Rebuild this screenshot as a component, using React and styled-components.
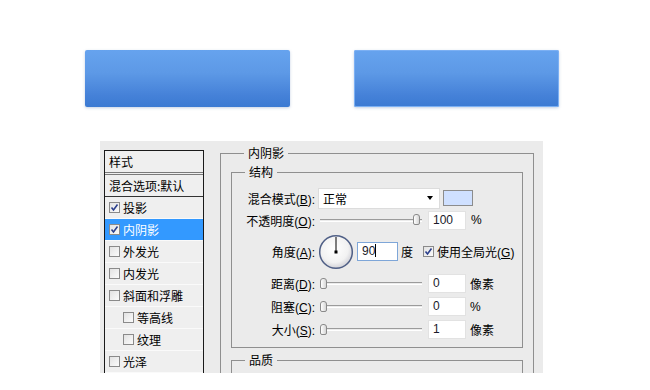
import React from 'react';
import styled, { createGlobalStyle } from 'styled-components';

const Global = createGlobalStyle`
  body {
    margin: 0;
    background: #fff;
    font-family: "Noto Sans CJK SC", "Liberation Sans", sans-serif;
    font-size: 12px;
    color: #000;
  }
`;

const Page = styled.div`
  width: 650px;
  height: 390px;
  overflow: hidden;
  padding-top: 50px;
  box-sizing: border-box;
`;

const ButtonRow = styled.div`
  display: flex;
  gap: 64px;
  padding-left: 85px;
`;

const BlueButton = styled.div`
  width: 205px;
  height: 57px;
  border-radius: 2px;
  background: linear-gradient(#66a3ee 0%, #5d99e6 40%, #4581d8 80%, #3b7ad2 100%);
  box-shadow: ${p => p.$stroke
    ? 'inset 0 0 0 1px #7cb0f3, 0 1px 3px rgba(60,100,160,0.3)'
    : '0 1px 3px rgba(60,100,160,0.3)'};
`;

const Panel = styled.div`
  display: flex;
  align-items: flex-start;
  margin: 34px 0 0 100px;
  width: 443px;
  height: 232px;
  background: #ebebeb;
  overflow: hidden;
`;

const StyleList = styled.div`
  margin: 9px 0 0 4px;
  width: 100px;
  box-sizing: border-box;
  border: 1px solid #1a1a1a;
  border-bottom: none;
  background: #efefef;
`;

const ListHeader = styled.div`
  height: 21px;
  line-height: 21px;
  padding-left: 4px;
  border-bottom: 3px double #7a7a7a;
`;

const ListItem = styled.div`
  display: flex;
  align-items: center;
  gap: 3px;
  height: 21px;
  padding-left: ${p => (p.$indent ? 18 : 4)}px;
  border-bottom: 1px solid ${p => (p.$dark ? '#333' : '#fafafa')};
  background: ${p => (p.$selected ? '#3399ff' : 'transparent')};
  color: ${p => (p.$selected ? '#fff' : '#000')};
`;

const Box = styled.span`
  width: 11px;
  height: 11px;
  box-sizing: border-box;
  border: 1px solid #8a8a8a;
  background: linear-gradient(135deg, #e2e2e2, #fbfbfb);
  display: inline-flex;
  align-items: center;
  justify-content: center;
  flex: none;
`;

const Settings = styled.div`
  margin: 5px 0 0 16px;
`;

const Group = styled.fieldset`
  margin: 0;
  margin-top: ${p => p.$top || 0}px;
  width: ${p => p.$width}px;
  box-sizing: border-box;
  border: 1px solid #8f8f8f;
  padding: ${p => p.$pad};
  min-width: 0;
`;

const Legend = styled.legend`
  padding: 0 4px;
  margin-left: ${p => p.$offset || 12}px;
  height: 14px;
  line-height: 14px;
`;

const Row = styled.div`
  display: grid;
  grid-template-columns: 83px auto;
  align-items: center;
  height: ${p => p.$h || 23}px;
`;

const Label = styled.div`
  text-align: right;
  white-space: nowrap;
`;

const Key = styled.span`
  font-family: "Liberation Sans", sans-serif;
  u { text-decoration: underline; }
`;

const Controls = styled.div`
  display: flex;
  align-items: center;
  padding-left: 3px;
`;

const Select = styled.div`
  width: 122px;
  height: 21px;
  box-sizing: border-box;
  background: #fff;
  border: 1px solid #dcdcdc;
  display: flex;
  align-items: center;
  justify-content: space-between;
  padding: 0 6px 0 4px;
`;

const Arrow = styled.span`
  width: 0;
  height: 0;
  border-left: 3.5px solid transparent;
  border-right: 3.5px solid transparent;
  border-top: 4px solid #000;
`;

const Swatch = styled.div`
  width: 30px;
  height: 16px;
  margin-left: 3px;
  box-sizing: border-box;
  border: 1px solid #8c8c8c;
  background: #cfe0ff;
`;

const Track = styled.div`
  position: relative;
  width: 102px;
  margin-left: 2px;
  height: 14px;
  display: flex;
  align-items: center;
  &::before {
    content: '';
    flex: 1;
    height: 1px;
    border-top: 1px solid #9b9b9b;
    border-bottom: 1px solid #fff;
  }
`;

const Thumb = styled.span`
  position: absolute;
  top: 1px;
  left: ${p => (p.$end ? 93 : 0)}px;
  width: 7px;
  height: 11px;
  box-sizing: border-box;
  border: 1px solid #8a8a8a;
  border-radius: 3px 3px 2px 2px;
  background: linear-gradient(90deg, #fff, #d6d6d6);
`;

const Field = styled.div`
  width: ${p => p.$w || 38}px;
  height: 19px;
  margin-left: ${p => p.$ml || 6}px;
  box-sizing: border-box;
  background: #fff;
  border: 1px solid ${p => (p.$focus ? '#7ea6d8' : '#e2e2e2')};
  padding-left: 4px;
  line-height: 17px;
  font-family: "Liberation Sans", sans-serif;
  font-size: 12px;
  color: #1a1a2a;
`;

const Caret = styled.span`
  display: inline-block;
  width: 1px;
  height: 13px;
  background: #000;
  vertical-align: -2px;
`;

const Unit = styled.span`
  margin-left: ${p => p.$ml || 4}px;
  font-family: ${p => (p.$latin ? '"Liberation Sans", sans-serif' : 'inherit')};
`;

const CheckLabel = styled.span`
  display: flex;
  align-items: center;
  gap: 3px;
  margin-left: 10px;
`;

const Check = ({ on }) => (
  <Box>
    {on && (
      <svg width="9" height="9" viewBox="0 0 9 9">
        <path d="M1.5 4.5 L3.5 7 L7.5 1.5" fill="none" stroke="#2b3f8c" strokeWidth="1.6" />
      </svg>
    )}
  </Box>
);

const Dial = () => (
  <svg width="36" height="36" viewBox="0 0 36 36" style={{ flex: 'none' }}>
    <defs>
      <radialGradient id="dg" cx="45%" cy="40%" r="60%">
        <stop offset="0%" stopColor="#ffffff" />
        <stop offset="70%" stopColor="#f2f2f2" />
        <stop offset="100%" stopColor="#d2d2d8" />
      </radialGradient>
    </defs>
    <circle cx="18" cy="18" r="16.3" fill="url(#dg)" stroke="#4f5f86" strokeWidth="1.5" />
    <line x1="18" y1="18" x2="18" y2="3" stroke="#000" strokeWidth="1" />
    <rect x="16.5" y="16.5" width="3" height="3" fill="#000" />
  </svg>
);

const effects = [
  { name: '投影', on: true },
  { name: '内阴影', on: true, selected: true },
  { name: '外发光' },
  { name: '内发光' },
  { name: '斜面和浮雕' },
  { name: '等高线', indent: true },
  { name: '纹理', indent: true },
  { name: '光泽' },
];

const K = ({ k, colon = true }) => (
  <Key>(<u>{k}</u>){colon ? ':' : ''}</Key>
);

const SliderRow = ({ label, k, value, unit, latin }) => (
  <Row>
    <Label>{label}<K k={k} /></Label>
    <Controls>
      <Track><Thumb /></Track>
      <Field>{value}</Field>
      <Unit $latin={latin}>{unit}</Unit>
    </Controls>
  </Row>
);

export default function App() {
  return (
    <Page>
      <Global />
      <ButtonRow>
        <BlueButton />
        <BlueButton $stroke />
      </ButtonRow>
      <Panel>
        <StyleList>
          <ListHeader>样式</ListHeader>
          <ListItem $dark>混合选项:默认</ListItem>
          {effects.map(e => (
            <ListItem key={e.name} $selected={e.selected} $indent={e.indent}>
              <Check on={e.on} />
              {e.name}
            </ListItem>
          ))}
        </StyleList>
        <Settings>
          <Group $width={314} $pad="5px 10px 0 10px">
            <Legend $offset={13}>内阴影</Legend>
            <Group $width={292} $pad="8px 0 6px 0">
              <Legend $offset={13}>结构</Legend>
              <Row $h={22}>
                <Label>混合模式<K k="B" /></Label>
                <Controls>
                  <Select>正常<Arrow /></Select>
                  <Swatch />
                </Controls>
              </Row>
              <Row $h={22}>
                <Label>不透明度<K k="O" /></Label>
                <Controls>
                  <Track><Thumb $end /></Track>
                  <Field>100</Field>
                  <Unit $ml={5} $latin>%</Unit>
                </Controls>
              </Row>
              <Row $h={41}>
                <Label>角度<K k="A" /></Label>
                <Controls>
                  <Dial />
                  <Field $w={41} $ml={3} $focus>90<Caret /></Field>
                  <Unit $ml={3}>度</Unit>
                  <CheckLabel>
                    <Check on />
                    <span>使用全局光<K k="G" colon={false} /></span>
                  </CheckLabel>
                </Controls>
              </Row>
              <SliderRow label="距离" k="D" value="0" unit="像素" />
              <SliderRow label="阻塞" k="C" value="0" unit="%" latin />
              <SliderRow label="大小" k="S" value="1" unit="像素" />
            </Group>
            <Group $width={292} $top={5} $pad="8px 0 40px 0">
              <Legend $offset={13}>品质</Legend>
            </Group>
          </Group>
        </Settings>
      </Panel>
    </Page>
  );
}
